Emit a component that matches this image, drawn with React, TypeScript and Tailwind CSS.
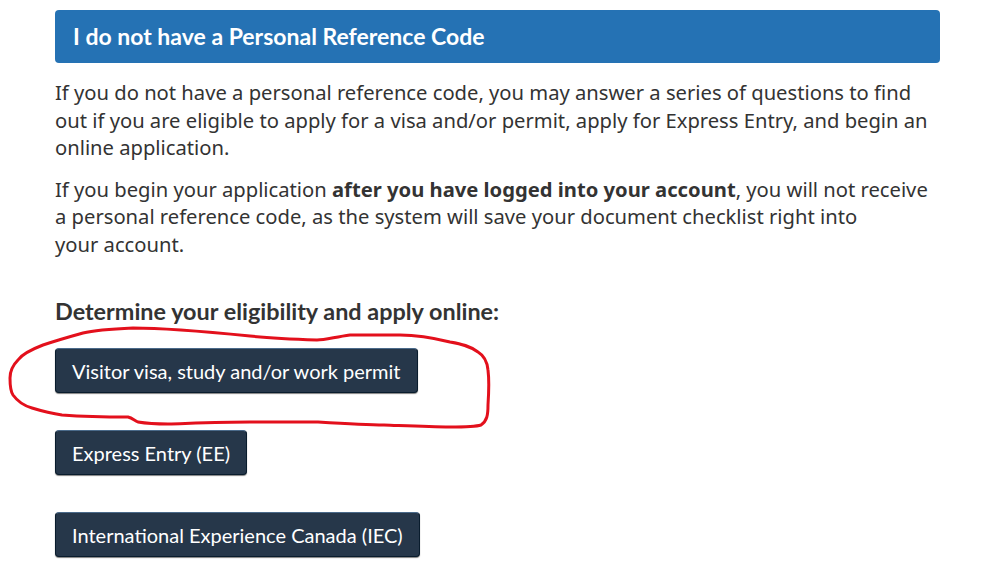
import React from "react";

const lato = { fontFamily: "Lato, 'Noto Sans', sans-serif" };

function Btn({ children }: { children: React.ReactNode }) {
  return (
    <button
      className="h-[45px] px-[16px] rounded-[4px] bg-[#26374a] text-white text-[20px] border border-[#091c2d] border-t-[#4a6a8a] shadow-[0_1px_1px_rgba(0,0,0,0.5)] self-start"
      style={lato}
    >
      {children}
    </button>
  );
}

export default function App() {
  return (
    <div className="relative w-[1000px] h-[580px] bg-white overflow-hidden">
      <div className="pl-[55px] pr-[60px] pt-[10px]">
        <div
          className="h-[53px] rounded-[4px] bg-[#2572b4] text-white font-bold text-[23px] flex items-center pl-[18px]"
          style={lato}
        >
          I do not have a Personal Reference Code
        </div>
        <div
          className="text-[#333] text-[20.2px] leading-[27.5px]"
          style={{ fontFamily: "'Noto Sans', 'Open Sans', sans-serif" }}
        >
          <p className="mt-[16px]">
            If you do not have a personal reference code, you may answer a series of questions to find out if you are eligible to apply for a visa and/or permit, apply for Express Entry, and begin an online application.
          </p>
          <p className="mt-[14px]">
            If you begin your application <b>after you have logged into your account</b>, you will not receive a personal reference code, as the system will save your document checklist right into your{"\u00a0"}account.
          </p>
        </div>
        <h2 className="mt-[38px] text-[23.4px] font-bold text-[#333] leading-[30px]" style={lato}>
          Determine your eligibility and apply online:
        </h2>
        <div className="flex flex-col mt-[22px] gap-[37px]">
          <Btn>Visitor visa, study and/or work permit</Btn>
          <Btn>Express Entry (EE)</Btn>
          <Btn>International Experience Canada (IEC)</Btn>
        </div>
      </div>
      <svg className="absolute left-0 top-0 pointer-events-none" width="1000" height="580">
        <path
          d="M250 336 C220 333 170 328 133 328 C110 329 95 330 83 333 C65 338 55 341 43 345 C30 350 22 354 18 360 C12 366 10 372 10 378 C10 386 11 392 13 395 C18 402 25 406 32 408 C45 412 55 414 62 415 C90 417 110 417 128 417 C132 418 134 420 138 422 C150 424 160 424 168 424 C200 423 225 422 250 422 C280 422 300 422 318 422 C350 424 370 425 384 425 C410 426 430 427 450 427 C465 427 475 427 481 425 C487 421 488 415 488 405 C489 390 489 378 488 370 C487 360 483 355 478 352 C470 346 462 344 450 342 C430 337 415 335 400 335 C380 335 365 335 350 335 C335 337 325 340 317 340 C290 339 270 338 250 336 Z"
          fill="none"
          stroke="#e3101c"
          strokeWidth="3"
          strokeLinejoin="round"
        />
      </svg>
    </div>
  );
}
